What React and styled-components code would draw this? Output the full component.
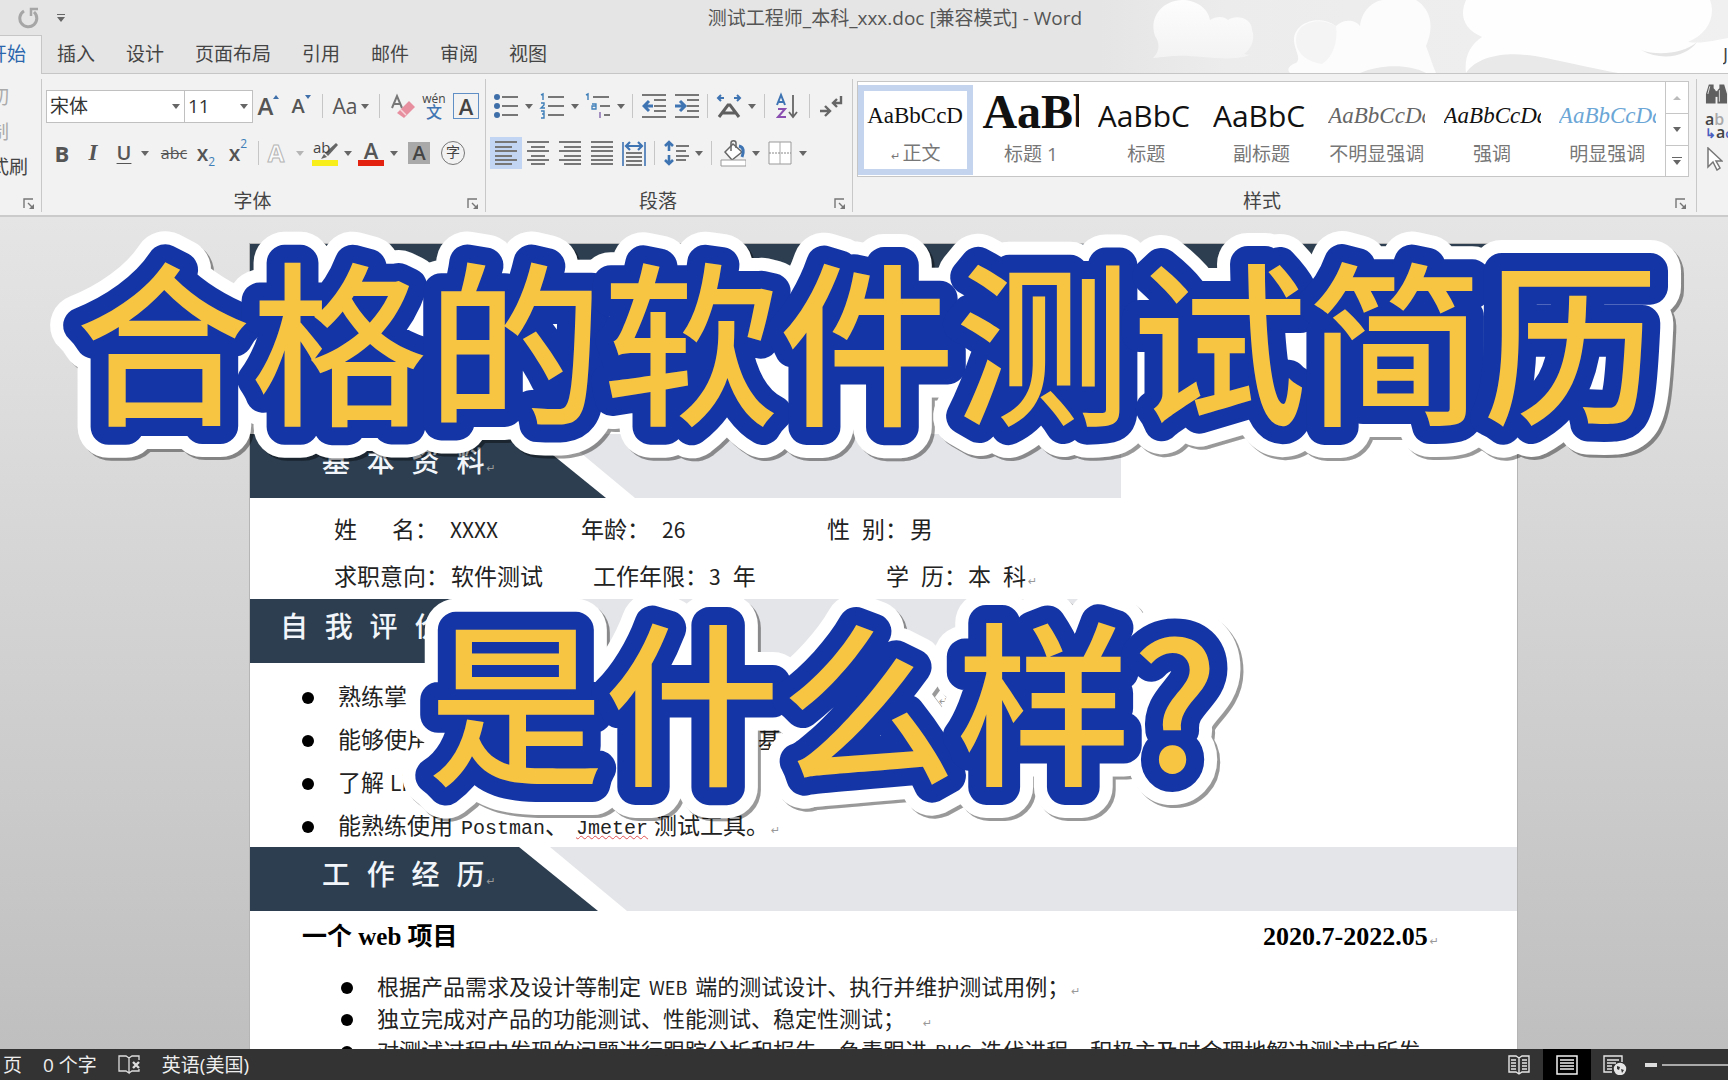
import React, { useState } from "react";
import styled, { createGlobalStyle, css } from "styled-components";

const UI_FONT = `"Open Sans", "Noto Sans CJK SC", sans-serif`;
const DOC_FONT = `"Liberation Mono", "Noto Sans CJK SC", monospace`;

const STYLES = [
  { name: "正文", sample: "AaBbCcD", kind: "body", linked: true },
  { name: "标题 1", sample: "AaBb", kind: "heading" },
  { name: "标题", sample: "AaBbC", kind: "title" },
  { name: "副标题", sample: "AaBbC", kind: "title" },
  { name: "不明显强调", sample: "AaBbCcDd", kind: "subtle" },
  { name: "强调", sample: "AaBbCcDd", kind: "emphasis" },
  { name: "明显强调", sample: "AaBbCcDd", kind: "intense" },
];

const TABS = ["开始", "插入", "设计", "页面布局", "引用", "邮件", "审阅", "视图"];

/* ---------- icons ---------- */

const Arrow = ({ faded }) => (
  <svg width="8" height="5" viewBox="0 0 8 5">
    <path d="M0 0h8L4 5z" fill={faded ? "#b5b5b5" : "#666"} />
  </svg>
);

const Icon = ({ children, w = 26, h = 28 }) => (
  <svg width={w} height={h} viewBox={`0 0 ${w} ${h}`} fill="none">
    {children}
  </svg>
);

const Lines = ({ rows, color = "#777" }) =>
  rows.map(([x1, x2, y]) => (
    <path key={`${x1}-${y}`} d={`M${x1} ${y}H${x2}`} stroke={color} strokeWidth="2" />
  ));

const Launcher = () => (
  <LauncherButton aria-label="更多选项">
    <svg width="12" height="12" viewBox="0 0 12 12" fill="none" stroke="#777">
      <path d="M1 10V1h9M5 5l4 4" strokeWidth="1.4" />
      <path d="M11 6v5H6z" fill="#777" stroke="none" />
    </svg>
  </LauncherButton>
);

const EraserIcon = () => (
  <Icon>
    <path d="M3 16L8 4l5 12M5 12h6" stroke="#777" strokeWidth="2" />
    <path d="M8 21L20 9l6 6-11 11z" fill="#e88f9f" />
    <path d="M11 17l6 6" stroke="#f7d5da" strokeWidth="1.5" />
  </Icon>
);

const HighlightIcon = () => (
  <Icon>
    <path d="M24 4L13 14l3 3L26 6z" fill="#666" />
    <path d="M12 15l3 3-6 2z" fill="#666" />
    <path d="M0 21h26v6H0z" fill="#f8ee1c" />
  </Icon>
);

const BulletsIcon = () => (
  <Icon>
    <circle cx="4" cy="5" r="3" fill="#3f6fa8" />
    <circle cx="4" cy="14" r="3" fill="#3f6fa8" />
    <circle cx="4" cy="23" r="3" fill="#3f6fa8" />
    <Lines rows={[[9, 25, 5], [9, 25, 14], [9, 25, 23]]} />
  </Icon>
);

const NumbersIcon = () => (
  <Icon>
    <path
      d="M2 3l2-1v6M2 11h3v2l-3 3h4M2 19h3v3H3h2v4H2"
      stroke="#3f7fb8"
      strokeWidth="1.4"
    />
    <Lines rows={[[9, 25, 5], [9, 25, 14], [9, 25, 23]]} />
  </Icon>
);

const MultilevelIcon = () => (
  <Icon>
    <path d="M1 3l2-1v6" stroke="#3f7fb8" strokeWidth="1.4" />
    <path d="M7 12h4v5H7v-3h4" stroke="#3f7fb8" strokeWidth="1.3" />
    <path d="M15 20v6" stroke="#8a6fb0" strokeWidth="1.5" />
    <Lines rows={[[8, 24, 5], [15, 25, 14], [19, 25, 23]]} />
  </Icon>
);

const IndentIcon = ({ right }) => (
  <Icon w={24}>
    <Lines rows={[[0, 24, 3], [12, 24, 8], [12, 24, 14], [12, 24, 19], [0, 24, 25]]} />
    {right ? (
      <path d="M0 14h8M5 9l5 5-5 5" stroke="#3f74b3" strokeWidth="3" />
    ) : (
      <path d="M11 14H3M7 9l-5 5 5 5" stroke="#3f74b3" strokeWidth="3" />
    )}
  </Icon>
);

const TextWidthIcon = () => (
  <Icon>
    <path d="M3 25l9-12h2l9 12M7 21h12" stroke="#5f5f5f" strokeWidth="3" />
    <path d="M8 6H2M5 3L2 6l3 3M18 6h6M21 3l3 3-3 3" stroke="#3f74b3" strokeWidth="2" />
  </Icon>
);

const SortIcon = () => (
  <Icon w={22}>
    <path d="M1 13L5 3l4 10M3 10h5" stroke="#3f74b3" strokeWidth="2" />
    <path d="M2 17h7L2 25h8" stroke="#8a4fb0" strokeWidth="2" />
    <path d="M17 3v21M13 20l4 5 4-5" stroke="#666" strokeWidth="1.8" />
  </Icon>
);

const MarksIcon = () => (
  <Icon w={24}>
    <path d="M22 4v7h-8M18 7l-4 4 4 4M1 19h9M6 14l5 5-5 5" stroke="#666" strokeWidth="2.4" />
  </Icon>
);

const ALIGN = {
  left: [[0, 22, 3], [0, 17, 8], [0, 22, 12], [0, 17, 17], [0, 22, 21], [0, 17, 25]],
  center: [[0, 22, 3], [4, 18, 8], [0, 22, 12], [4, 18, 17], [0, 22, 21], [4, 18, 25]],
  right: [[0, 22, 3], [5, 22, 8], [0, 22, 12], [5, 22, 17], [0, 22, 21], [5, 22, 25]],
  justify: [[0, 22, 3], [0, 22, 8], [0, 22, 12], [0, 22, 17], [0, 22, 21], [0, 22, 25]],
};

const AlignIcon = ({ kind }) => (
  <Icon w={22}>
    <Lines rows={ALIGN[kind]} />
  </Icon>
);

const DistributeIcon = () => (
  <Icon w={24}>
    <path d="M1 3v24M23 3v24" stroke="#3f74b3" strokeWidth="1.6" />
    <path d="M4 7h16M8 3L4 7l4 4M16 3l4 4-4 4" stroke="#3f74b3" strokeWidth="2.2" />
    <Lines rows={[[4, 20, 14], [4, 20, 18], [4, 20, 22], [4, 20, 26]]} />
  </Icon>
);

const SpacingIcon = () => (
  <Icon>
    <path d="M6 3v9M2 7l4-4 4 4M6 16v9M2 21l4 4 4-4" stroke="#3f74b3" strokeWidth="2.6" />
    <Lines rows={[[13, 26, 7], [13, 23, 12], [13, 26, 17], [13, 23, 21]]} />
  </Icon>
);

const BucketIcon = () => (
  <Icon>
    <path d="M13 5l9 8-10 8-7-8z" fill="#fff" stroke="#666" strokeWidth="1.5" />
    <path d="M11 12V4c0-3 5-3 5 0v5" stroke="#666" strokeWidth="1.5" />
    <path d="M19 7c5 1 5 6 3 11" stroke="#3f74b3" strokeWidth="3" />
    <path d="M1 21h25v6H1z" fill="#fff" stroke="#999" />
  </Icon>
);

const BordersIcon = () => (
  <Icon>
    <path d="M2 3h22v22H2z" fill="#fff" stroke="#999" />
    <path d="M13 3v22" stroke="#aaa" />
    <path d="M2 14h22" stroke="#888" strokeDasharray="2 1" />
  </Icon>
);

const RedoIcon = () => (
  <svg width="22" height="22" viewBox="0 0 22 22" fill="none" stroke="#a6a6a6" strokeWidth="3">
    <path d="M6 4a8.500 8.500 0 1 0 10 1" />
    <path d="M20 2h-7v7" strokeWidth="2.500" />
  </svg>
);

const Clouds = () => (
  <svg width="628" height="73" viewBox="0 0 628 73">
    <defs>
      <linearGradient id="haze" x1="0" x2="1">
        <stop offset="0" stopColor="#e5e5e5" />
        <stop offset="0.2" stopColor="#ececec" />
        <stop offset="1" stopColor="#f0f0f0" />
      </linearGradient>
      <linearGradient id="puff" x1="0" x2="0" y1="0" y2="1">
        <stop offset="0" stopColor="#fdfdfd" />
        <stop offset="1" stopColor="#f3f3f3" />
      </linearGradient>
    </defs>
    <path d="M0 0h628v73H0z" fill="url(#haze)" />
    <path
      d="M53 58c8-8 6-16 2-22C48 14 66 0 82 0c14 0 26 8 28 20 6-4 14-4 18 0 8-6 24-2 24 10 4 10-2 20-8 24 6 2 8 0 12-4-12 16-60 4-80 6-8 0-18 2-25 2z"
      fill="url(#puff)"
    />
    <path
      d="M194 40c0-18 26-26 42-14 8-8 20-6 24 0C262 8 276 0 284 0h32c16 10 18 28 10 46 4 10 6 18 10 27H190c-4-4 0-8 6-10 6-4-2-14-2-23z"
      fill="#fcfcfc"
    />
    <path d="M196 40c0-18 24-24 40-14 2 14-2 30-14 38-14-2-26-10-26-24z" fill="#f4f4f4" />
    <path d="M260 73c20-9 50-9 66 0z" fill="#e9e9e9" />
    <path
      d="M366 0h244c6 16-2 34-22 42 16 2 26-2 40-4v35H366c-2-16 4-28 16-36C362 28 360 14 366 0z"
      fill="#fefefe"
    />
    <path d="M366 73c14-20 48-22 80-15 28 6 50 11 72 15z" fill="#e9e9e9" />
    <path d="M541 50c16 6 42 4 56-8-10 14-34 20-56 8z" fill="#e4e4e4" />
  </svg>
);

const BinocularsIcon = () => (
  <svg width="24" height="24" viewBox="0 0 24 24" fill="#606060">
    <path d="M4 2h5v4l2 2v14H1V12zM15 2h5l3 10v10H13V8l2-2z" />
    <path d="M10 9h4v6h-4z" />
    <path d="M3 12l2-8M15 8v12" stroke="#ddd" />
  </svg>
);

const CursorIcon = () => (
  <svg width="18" height="24" viewBox="0 0 18 24" fill="#fff" stroke="#777" strokeWidth="1.5">
    <path d="M3 1v19l5-5 4 8 3-2-4-7h6z" />
  </svg>
);

const ProofIcon = () => (
  <svg width="23" height="20" viewBox="0 0 23 20" fill="none" stroke="#ddd" strokeWidth="1.3">
    <path d="M11 3L8 1H1v15h7l3 2zM11 3l3-2h7v4M11 18l3-2h7v-2" />
    <path d="M15 7l6 6M21 7l-6 6" strokeWidth="2.400" />
  </svg>
);

const ReadIcon = () => (
  <svg width="22" height="20" viewBox="0 0 22 20" fill="none" stroke="#e6e6e6" strokeWidth="1.4">
    <path d="M11 3L8 1H1v16h7l3 2 3-2h7V1h-7zM11 3v16" />
    <path d="M3 5h5M3 8h5M3 11h5M3 14h5M14 5h5M14 8h5M14 11h5M14 14h5" />
  </svg>
);

const PrintIcon = () => (
  <svg width="22" height="20" viewBox="0 0 22 20" fill="none" stroke="#f2f2f2" strokeWidth="1.5">
    <path d="M1 1h20v18H1zM4 5h14M4 8h14M4 11h14M4 14h14" />
  </svg>
);

const WebIcon = () => (
  <svg width="24" height="20" viewBox="0 0 24 20" fill="none" stroke="#e6e6e6" strokeWidth="1.4">
    <path d="M9 17H1V1h18v6M4 5h12M4 8h9M4 11h5M4 14h5" />
    <circle cx="17" cy="14" r="5.500" fill="#e6e6e6" />
    <path d="M14 11l3 1-1 3-2-1zM18 14l3 1-2 3z" fill="#333" stroke="none" />
  </svg>
);

/* ---------- page ---------- */

const Return = () => <ReturnMark>↵</ReturnMark>;

// Sticker lettering: one text, stroked twice underneath its own fill
const Sticker = () => (
  <Lettering viewBox="0 0 1728 620">
    <defs>
      <g id="lettering">
        <text x="75" y="195">合格的软件测试简历</text>
        <text x="428" y="555">是什么样?</text>
      </g>
    </defs>
    <use href="#lettering" fill="#fff" stroke="#fff" strokeWidth="62" />
    <use href="#lettering" fill="#1435a5" stroke="#1435a5" strokeWidth="36" />
    <use href="#lettering" fill="#f8c543" />
  </Lettering>
);

function App() {
  const [tab, setTab] = useState("开始");
  const [style, setStyle] = useState("正文");
  const [zoom, setZoom] = useState(50);

  return (
    <Window>
      <GlobalStyle />
      <Header>
        <Sky><Clouds /></Sky>
        <TitleBar>
          <QuickAccess>
            <QuickButton aria-label="恢复"><RedoIcon /></QuickButton>
            <QuickButton aria-label="自定义快速访问工具栏">
              <svg width="8" height="8" viewBox="0 0 8 8" fill="#666">
                <path d="M0 0h8v1H0zM0 3h8L4 8z" />
              </svg>
            </QuickButton>
          </QuickAccess>
          <Title>测试工程师_本科_xxx.doc [兼容模式] - Word</Title>
        </TitleBar>
        <Tabs>
          {TABS.map((name) => (
            <Tab key={name} $active={name === tab} onClick={() => setTab(name)}>
              {name}
            </Tab>
          ))}
          <Account>J</Account>
        </Tabs>
      </Header>

      <Ribbon>
        <ClipboardGroup>
          <ClipButton disabled>剪切</ClipButton>
          <ClipButton disabled>复制</ClipButton>
          <ClipButton>格式刷</ClipButton>
          <GroupFooter><Launcher /></GroupFooter>
        </ClipboardGroup>

        <Group $w={444}>
          <Tools>
            <Picker $w={139}>
              <select aria-label="字体" defaultValue="宋体"><option>宋体</option></select>
              <Arrow />
            </Picker>
            <Picker $w={69}>
              <select aria-label="字号" defaultValue="11"><option>11</option></select>
              <Arrow />
            </Picker>
            <Tool $w={31} aria-label="增大字号">
              <Glyph $size={24} $weight={600}>A</Glyph>
              <Tick viewBox="0 0 6 4"><path d="M0 4h6L3 0z" /></Tick>
            </Tool>
            <Tool $w={34} aria-label="减小字号">
              <Glyph $size={20} $weight={600}>A</Glyph>
              <Tick viewBox="0 0 6 4"><path d="M0 0h6L3 4z" /></Tick>
            </Tool>
            <Divider />
            <Tool $w={48} $gap={4} aria-label="更改大小写"><Glyph $size={21}>Aa</Glyph><Arrow /></Tool>
            <Divider />
            <Tool $w={36} aria-label="清除格式"><EraserIcon /></Tool>
            <Tool $w={28} aria-label="拼音指南"><Pinyin><i>wén</i><b>文</b></Pinyin></Tool>
            <Tool $w={36} aria-label="字符边框"><Boxed>A</Boxed></Tool>
          </Tools>
          <Tools>
            <Tool $w={32} aria-label="加粗"><Glyph $size={22} $weight={700}>B</Glyph></Tool>
            <Tool $w={30} aria-label="倾斜"><Glyph $size={23} $weight={700} $serif>I</Glyph></Tool>
            <Tool $w={50} $gap={10} aria-label="下划线">
              <Glyph $size={20} $weight={600} $line="underline">U</Glyph>
              <Arrow />
            </Tool>
            <Tool $w={32} aria-label="删除线"><Glyph $size={16} $line="line-through">abc</Glyph></Tool>
            <Tool $w={32} aria-label="下标"><Glyph $size={21} $weight={600}>x</Glyph><Small $low>2</Small></Tool>
            <Tool $w={32} aria-label="上标"><Glyph $size={21} $weight={600}>x</Glyph><Small>2</Small></Tool>
            <Divider />
            <Tool $w={46} $gap={12} aria-label="文本效果"><Outlined>A</Outlined><Arrow faded /></Tool>
            <Tool $w={46} $gap={6} aria-label="突出显示">
              <Layered><HighlightIcon /><span>ab</span></Layered>
              <Arrow />
            </Tool>
            <Tool $w={46} $gap={6} aria-label="字体颜色"><Colored>A</Colored><Arrow /></Tool>
            <Tool $w={36} aria-label="字符底纹"><Shaded>A</Shaded></Tool>
            <Tool $w={32} aria-label="带圈字符"><Circled>字</Circled></Tool>
          </Tools>
          <GroupFooter><span>字体</span><Launcher /></GroupFooter>
        </Group>

        <Group $w={367}>
          <Tools>
            <Tool $w={46} $gap={6} aria-label="项目符号"><BulletsIcon /><Arrow /></Tool>
            <Tool $w={46} $gap={6} aria-label="编号"><NumbersIcon /><Arrow /></Tool>
            <Tool $w={46} $gap={6} aria-label="多级列表"><MultilevelIcon /><Arrow /></Tool>
            <Divider />
            <Tool $w={34} aria-label="减少缩进量"><IndentIcon /></Tool>
            <Tool $w={32} aria-label="增加缩进量"><IndentIcon right /></Tool>
            <Divider />
            <Tool $w={48} $gap={6} aria-label="中文版式"><TextWidthIcon /><Arrow /></Tool>
            <Divider />
            <Tool $w={36} aria-label="排序"><SortIcon /></Tool>
            <Divider />
            <Tool $w={34} aria-label="显示编辑标记"><MarksIcon /></Tool>
          </Tools>
          <Tools>
            <Tool $w={32} $on aria-label="左对齐"><AlignIcon kind="left" /></Tool>
            <Tool $w={32} aria-label="居中"><AlignIcon kind="center" /></Tool>
            <Tool $w={32} aria-label="右对齐"><AlignIcon kind="right" /></Tool>
            <Tool $w={32} aria-label="两端对齐"><AlignIcon kind="justify" /></Tool>
            <Tool $w={32} aria-label="分散对齐"><DistributeIcon /></Tool>
            <Divider />
            <Tool $w={48} $gap={6} aria-label="行和段落间距"><SpacingIcon /><Arrow /></Tool>
            <Divider />
            <Tool $w={48} $gap={6} aria-label="底纹"><BucketIcon /><Arrow /></Tool>
            <Tool $w={46} $gap={6} aria-label="边框"><BordersIcon /><Arrow /></Tool>
          </Tools>
          <GroupFooter><span>段落</span><Launcher /></GroupFooter>
        </Group>

        <StylesGroup>
          <Gallery>
            {STYLES.map((s) => (
              <StyleCard key={s.name} $active={s.name === style} onClick={() => setStyle(s.name)}>
                <Sample $kind={s.kind}>{s.sample}</Sample>
                <StyleName>
                  {s.linked && <small>↵ </small>}
                  {s.name}
                </StyleName>
              </StyleCard>
            ))}
            <Scroller>
              <button aria-label="上一行">
                <svg width="8" height="4" viewBox="0 0 8 4"><path d="M0 4h8L4 0z" fill="#bbb" /></svg>
              </button>
              <button aria-label="下一行"><Arrow /></button>
              <button aria-label="其他">
                <svg width="10" height="8" viewBox="0 0 10 8" fill="#666">
                  <path d="M0 0h10v1H0zM1 3h8L5 8z" />
                </svg>
              </button>
            </Scroller>
          </Gallery>
          <GroupFooter><span>样式</span><Launcher /></GroupFooter>
        </StylesGroup>

        <EditGroup>
          <button aria-label="查找"><BinocularsIcon /></button>
          <button aria-label="替换">
            <Replace>
              <span>a<s>b</s></span>
              <span><em>↳</em>a<em>c</em></span>
            </Replace>
          </button>
          <button aria-label="选择"><CursorIcon /></button>
        </EditGroup>
      </Ribbon>

      <Workspace>
        <Page>
          <TopBanner />
          <Band $dark={356} $tail={396}>
            <BandTitle $indent={72}>基 本 资 料<Return /></BandTitle>
            <BandTail />
          </Band>
          <Info>
            <p>
              <Field $w={247}>姓<Gap $w={35} />名：<Gap $w={12} /><Latin>XXXX</Latin></Field>
              <Field $w={246}>年龄：<Gap $w={12} /><Latin>26</Latin></Field>
              <Field>性<Gap $w={12} />别：<Gap $w={2} />男</Field>
            </p>
            <p>
              <Field $w={259}>求职意向：<Gap $w={2} />软件测试</Field>
              <Field $w={293}>工作年限：<Gap $w={1} /><Latin>3</Latin><Gap $w={12} />年</Field>
              <Field>学<Gap $w={12} />历：<Gap $w={1} />本<Gap $w={12} />科<Return /></Field>
            </p>
          </Info>
          <Band $dark={348} $tail={396}>
            <BandTitle $indent={30}>自 我 评 价</BandTitle>
            <BandTail />
          </Band>
          <Skills>
            <li>熟练掌<Gap $w={530} /><Return /></li>
            <li>能够使用<Gap $w={328} />基</li>
            <li>了解<Gap $w={6} /><Latin>Linux</Latin></li>
            <li>
              能熟练使用<Gap $w={8} /><Latin $mono>Postman</Latin>、<Gap $w={8} />
              <Latin $mono $misspelt>Jmeter</Latin><Gap $w={6} />测试工具。<Return />
            </li>
          </Skills>
          <Band $dark={348} $tail={0}>
            <BandTitle $indent={72}>工 作 经 历<Return /></BandTitle>
            <BandTail />
          </Band>
          <Job>
            <h2>一个 web 项目</h2>
            <time>2020.7-2022.05<Return /></time>
          </Job>
          <Duties>
            <li>
              根据产品需求及设计等制定<Gap $w={8} /><Latin>WEB</Latin><Gap $w={8} />
              端的测试设计、执行并维护测试用例；<Return />
            </li>
            <li>独立完成对产品的功能测试、性能测试、稳定性测试；<Gap $w={16} /><Return /></li>
            <li>
              对测试过程中发现的问题进行跟踪分析和报告，负责跟进<Gap $w={8} /><Latin>BUG</Latin>
              <Gap $w={8} />迭代进程，积极主及时合理地解决测试中所发
            </li>
          </Duties>
        </Page>

        <Sticker />
      </Workspace>

      <StatusBar>
        <span>页</span>
        <span>0 个字</span>
        <ProofIcon />
        <span>英语(美国)</span>
        <Views>
          <ViewButton aria-label="阅读视图"><ReadIcon /></ViewButton>
          <ViewButton $active aria-label="页面视图"><PrintIcon /></ViewButton>
          <ViewButton aria-label="Web 版式视图"><WebIcon /></ViewButton>
          <ZoomOut aria-label="缩小" />
          <ZoomTrack>
            <input
              type="range"
              aria-label="显示比例"
              value={zoom}
              onChange={(e) => setZoom(Number(e.target.value))}
            />
          </ZoomTrack>
        </Views>
      </StatusBar>
    </Window>
  );
}

const GlobalStyle = createGlobalStyle`
  * {
    box-sizing: border-box;
  }
  body {
    margin: 0;
    font-family: ${UI_FONT};
    color: #444;
  }
  button {
    padding: 0;
    border: none;
    background: none;
    font: inherit;
    color: inherit;
  }
  p, h1, h2, ul {
    margin: 0;
    padding: 0;
  }
`;

const Window = styled.div`
  display: flex;
  flex-direction: column;
  height: 100vh;
  overflow: hidden;
  background: #e5e5e5;
  font-size: 19px;
`;

const Header = styled.header`
  position: relative;
  border-bottom: 1px solid #c6c6c6;
`;

const Sky = styled.div`
  position: absolute;
  top: 0;
  right: 0;
  svg {
    display: block;
  }
`;

const TitleBar = styled.div`
  position: relative;
  display: grid;
  grid-template-columns: 1fr auto 1fr;
  align-items: center;
  height: 35px;
`;

const QuickAccess = styled.div`
  display: flex;
  align-items: center;
  gap: 17px;
  padding-left: 18px;
`;

const QuickButton = styled.button`
  display: flex;
`;

const Title = styled.h1`
  grid-column: 2;
  margin-left: 62px;
  font-size: 19px;
  font-weight: 400;
  line-height: 32px;
  color: #555;
`;

const Tabs = styled.nav`
  position: relative;
  display: flex;
  height: 38px;
  margin-left: -27px;
`;

const Tab = styled.button`
  padding: 0 16px 0 15px;
  line-height: 37px;
  color: #444;
  ${({ $active }) =>
    $active &&
    css`
      height: 39px;
      background: #f2f2f2;
      box-shadow: inset -1px 1px #c6c6c6;
      color: #2b66ad;
    `}
`;

const Account = styled.span`
  width: 5px;
  margin-left: auto;
  overflow: hidden;
  line-height: 38px;
`;

const Ribbon = styled.div`
  display: flex;
  height: 143px;
  padding-top: 5px;
  background: #f2f2f2;
  border-bottom: 2px solid #cbcbcb;
`;

const Group = styled.section`
  display: flex;
  flex-direction: column;
  flex: none;
  width: ${({ $w }) => $w}px;
  height: 133px;
  padding: 6px 4px 0;
  border-right: 1px solid #c8c8c8;
`;

const ClipboardGroup = styled(Group)`
  width: 71px;
  margin-left: -29px;
  padding: 0 4px 0 0;
`;

const ClipButton = styled.button`
  flex: none;
  height: 35px;
  line-height: 32px;
  text-align: left;
  white-space: nowrap;
  &:disabled {
    color: #aaa;
  }
`;

const StylesGroup = styled(Group)`
  flex: 1;
  min-width: 0;
  padding: 2px 7px 0 4px;
`;

const GroupFooter = styled.div`
  display: grid;
  grid-template-columns: 1fr 22px;
  margin-top: auto;
  height: 22px;
  line-height: 22px;
  text-align: center;
`;

const LauncherButton = styled.button`
  display: flex;
  grid-column: 2;
  align-self: end;
  padding: 0 0 2px 8px;
`;

const Tools = styled.div`
  display: flex;
  align-items: center;
  height: 42px;
  & + & {
    height: 32px;
    margin-top: 10px;
  }
`;

const Tool = styled.button`
  position: relative;
  display: flex;
  flex: none;
  align-items: center;
  justify-content: center;
  gap: ${({ $gap }) => $gap || 0}px;
  width: ${({ $w }) => $w}px;
  height: 32px;
  background: ${({ $on }) => ($on ? "#c2d5f2" : "none")};
`;

const Divider = styled.span`
  flex: none;
  width: 1px;
  height: 24px;
  margin: 0 4px;
  background: #c6c6c6;
`;

const Picker = styled.label`
  position: relative;
  flex: none;
  width: ${({ $w }) => $w}px;
  select {
    width: 100%;
    height: 33px;
    padding: 0 3px;
    appearance: none;
    background: #fff;
    border: 1px solid #c0c0c0;
    border-radius: 0;
    font: 19px ${UI_FONT};
    color: #333;
  }
  svg {
    position: absolute;
    right: 5px;
    top: 14px;
  }
  & + & {
    margin-left: -1px;
  }
`;

const Glyph = styled.span`
  font-size: ${({ $size }) => $size}px;
  font-weight: ${({ $weight }) => $weight || 400};
  font-family: ${({ $serif }) => ($serif ? `"Liberation Serif", serif` : UI_FONT)};
  font-style: ${({ $serif }) => ($serif ? "italic" : "normal")};
  text-decoration: ${({ $line }) => $line || "none"};
  text-decoration-thickness: 1px;
  text-underline-offset: 3px;
  line-height: 28px;
  color: #555;
`;

const Tick = styled.svg`
  align-self: flex-start;
  width: 6px;
  height: 4px;
  margin-top: 5px;
  fill: #3f6fa8;
`;

const Small = styled.span`
  align-self: ${({ $low }) => ($low ? "flex-end" : "flex-start")};
  font-size: 12px;
  line-height: 14px;
  color: #3f7fb8;
`;

const Pinyin = styled.span`
  display: flex;
  flex-direction: column;
  align-items: center;
  i {
    font-size: 12px;
    font-style: normal;
    line-height: 11px;
  }
  b {
    font-size: 16px;
    font-weight: 500;
    line-height: 16px;
    color: #3f74b3;
  }
`;

const Boxed = styled.span`
  width: 26px;
  height: 26px;
  border: 1px solid #5f8fc4;
  font-size: 22px;
  font-weight: 600;
  line-height: 24px;
  text-align: center;
`;

const Shaded = styled(Boxed)`
  width: 22px;
  height: 22px;
  border: none;
  background: #a9a9a9;
  font-size: 20px;
  line-height: 22px;
`;

const Circled = styled(Boxed)`
  width: 24px;
  height: 24px;
  border: 1px solid #777;
  border-radius: 50%;
  font-size: 14px;
  font-weight: 400;
  line-height: 20px;
`;

const Outlined = styled.span`
  font-size: 24px;
  font-weight: 700;
  line-height: 28px;
  color: #fafafa;
  -webkit-text-stroke: 1px #b5b5b5;
`;

const Layered = styled.span`
  position: relative;
  display: flex;
  span {
    position: absolute;
    left: 1px;
    top: 0;
    font-size: 15px;
    line-height: 16px;
  }
`;

const Colored = styled.span`
  width: 26px;
  border-bottom: 6px solid #e3230f;
  font-size: 22px;
  font-weight: 600;
  line-height: 20px;
  text-align: center;
  color: #555;
`;

const Gallery = styled.div`
  display: flex;
  height: 96px;
  background: #fff;
  border: 1px solid #c6c6c6;
`;

const StyleCard = styled.button`
  display: flex;
  flex-direction: column;
  flex: 1;
  align-items: center;
  min-width: 0;
  margin: 3px 0 1px;
  border: 6px solid ${({ $active }) => ($active ? "#c5d4ee" : "transparent")};
`;

const Sample = styled.span`
  width: 97px;
  height: 50px;
  overflow: hidden;
  line-height: 50px;
  text-align: left;
  white-space: nowrap;
  color: #111;
  font-family: "Liberation Serif", serif;
  font-size: 23px;
  ${({ $kind }) => $kind === "heading" && `font-size: 48px; font-weight: 700; line-height: 42px;`}
  ${({ $kind }) => $kind === "title" && `font-size: 30px; font-family: ${UI_FONT};`}
  ${({ $kind }) => $kind === "subtle" && `font-style: italic; color: #666;`}
  ${({ $kind }) => $kind === "emphasis" && `font-style: italic;`}
  ${({ $kind }) => $kind === "intense" && `font-style: italic; color: #6ba6d6;`}
`;

const StyleName = styled.span`
  line-height: 26px;
  color: #777;
  white-space: nowrap;
  small {
    font-size: 11px;
  }
`;

const Scroller = styled.div`
  display: grid;
  grid-template-rows: repeat(3, 1fr);
  flex: none;
  width: 23px;
  border-left: 1px solid #c6c6c6;
  button {
    display: flex;
    align-items: center;
    justify-content: center;
  }
  button + button {
    border-top: 1px solid #c6c6c6;
  }
`;

const EditGroup = styled.section`
  display: flex;
  flex-direction: column;
  flex: none;
  gap: 7px;
  width: 31px;
  padding: 3px 0 0 8px;
  overflow: hidden;
  button {
    display: flex;
  }
`;

const Replace = styled.span`
  display: flex;
  flex-direction: column;
  font-size: 16px;
  font-weight: 600;
  line-height: 13px;
  text-align: left;
  white-space: nowrap;
  s {
    color: #aaa;
    text-decoration: none;
  }
  em {
    font-size: 13px;
    font-style: normal;
    color: #4a5fc0;
  }
`;

const Workspace = styled.main`
  position: relative;
  flex: 1;
  min-height: 0;
  padding: 27px 211px 0 250px;
  overflow: hidden;
  background: linear-gradient(#e5e5e5, #bfbfbf);
`;

const Page = styled.article`
  background: #fff;
  outline: 1px solid #b5b5b5;
  font-family: ${DOC_FONT};
  font-size: 23px;
  color: #222;
`;

const TopBanner = styled.div`
  height: 100px;
  margin-bottom: 90px;
  background: #2c3e50;
`;

const Band = styled.div`
  display: grid;
  grid-template-columns: ${({ $dark }) => $dark}px 1fr;
  height: 64px;
  padding-right: ${({ $tail }) => $tail}px;
`;

const BandTitle = styled.h2`
  height: 64px;
  padding-left: ${({ $indent }) => $indent}px;
  background: #2c3e50;
  clip-path: polygon(0 0, calc(100% - 79px) 0, 100% 100%, 0 100%);
  font-size: 28px;
  font-weight: 500;
  line-height: 62px;
  color: #f2f6fa;
`;

const BandTail = styled.div`
  margin-left: -48px;
  background: #e4e5e8;
  clip-path: polygon(0 0, 100% 0, 100% 100%, 77px 100%);
`;

const Info = styled.div`
  padding: 12px 0 0 84px;
  p {
    display: flex;
    height: 42px;
    line-height: 44px;
    white-space: nowrap;
  }
  p + p {
    margin-top: 5px;
  }
`;

const Field = styled.span`
  flex: none;
  width: ${({ $w }) => ($w ? `${$w}px` : "auto")};
`;

const Gap = styled.span`
  display: inline-block;
  width: ${({ $w }) => $w}px;
`;

const Latin = styled.span`
  font-family: "Noto Sans CJK SC", sans-serif;
  font-size: 21px;
  line-height: 1;
  ${({ $mono }) => $mono && `font-family: "Liberation Mono", monospace; font-size: 20px;`}
  ${({ $misspelt }) => $misspelt && `text-decoration: underline wavy #e05050 1px;`}
`;

const ReturnMark = styled.span`
  margin-left: 2px;
  font-family: "DejaVu Sans", sans-serif;
  font-size: 11px;
  font-weight: 400;
  line-height: 1;
  color: #999;
`;

const Bulleted = styled.ul`
  list-style: none;
  white-space: nowrap;
  li {
    display: flex;
    align-items: baseline;
  }
  li::before {
    content: "";
    flex: none;
    align-self: center;
    width: 12px;
    height: 12px;
    border-radius: 50%;
    background: #000;
  }
`;

const Skills = styled(Bulleted)`
  padding: 13px 0 0 52px;
  margin-bottom: -1px;
  li {
    height: 43px;
    line-height: 46px;
  }
  li::before {
    margin-right: 24px;
  }
`;

const Job = styled.div`
  display: flex;
  justify-content: space-between;
  height: 61px;
  padding: 5px 78px 0 52px;
  font-family: "Liberation Serif", "Noto Sans CJK SC", serif;
  font-size: 26px;
  font-weight: 700;
  line-height: 42px;
  color: #000;
  h2 {
    font-size: 25px;
  }
`;

const Duties = styled(Bulleted)`
  padding-left: 91px;
  font-size: 22px;
  li {
    height: 32px;
    line-height: 35px;
  }
  li::before {
    margin-right: 24px;
  }
  ${Latin} {
    font-size: 18px;
  }
`;

const Lettering = styled.svg`
  position: absolute;
  top: 0;
  left: 0;
  width: 100%;
  font-family: "Noto Sans CJK SC", sans-serif;
  font-size: 176px;
  font-weight: 500;
  stroke-linejoin: round;
  filter: drop-shadow(3px 3px 0 rgba(0, 0, 0, 0.4));
  pointer-events: none;
`;

const StatusBar = styled.footer`
  display: flex;
  flex: none;
  align-items: center;
  gap: 21px;
  height: 31px;
  padding-left: 3px;
  background: #333;
  color: #eee;
  line-height: 30px;
`;

const Views = styled.div`
  display: flex;
  align-items: center;
  height: 100%;
  margin-left: auto;
`;

const ViewButton = styled.button`
  display: flex;
  align-items: center;
  justify-content: center;
  width: 48px;
  height: 100%;
  background: ${({ $active }) => ($active ? "#000" : "none")};
`;

const ZoomOut = styled.button`
  width: 12px;
  height: 4px;
  margin: 0 5px 0 6px;
  background: #ddd;
`;

const ZoomTrack = styled.div`
  display: flex;
  width: 66px;
  overflow: hidden;
  input {
    flex: none;
    width: 170px;
    height: 20px;
    margin: 0;
    appearance: none;
    background: linear-gradient(#aaa, #aaa) center / 100% 2px no-repeat;
  }
`;

export default App;
